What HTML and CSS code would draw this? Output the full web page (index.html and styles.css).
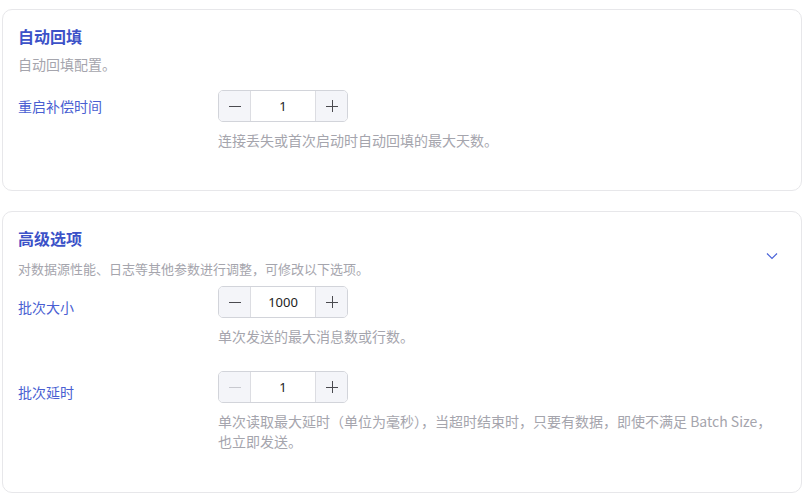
FILE: index.html
```html
<!DOCTYPE html>
<html lang="zh-CN">
<head>
<meta charset="utf-8">
<link rel="stylesheet" href="styles.css">
</head>
<body>
<div class="page">
  <section class="card card-first">
    <div class="card-head">
      <div class="head-text">
        <h2 class="title">自动回填</h2>
        <p class="desc">自动回填配置。</p>
      </div>
    </div>
    <div class="form">
      <div class="row">
        <label class="label">重启补偿时间</label>
        <div class="field">
          <div class="stepper">
            <span class="btn"><svg width="12" height="12" viewBox="0 0 12 12"><path d="M0 6.5H12" stroke="currentColor" stroke-width="1"/></svg></span>
            <span class="value">1</span>
            <span class="btn"><svg width="12" height="12" viewBox="0 0 12 12"><path d="M0 6.5H12M6.5 0V12" stroke="currentColor" stroke-width="1"/></svg></span>
          </div>
          <p class="hint">连接丢失或首次启动时自动回填的最大天数。</p>
        </div>
      </div>
    </div>
  </section>

  <section class="card card-second">
    <div class="card-head">
      <div class="head-text">
        <h2 class="title">高级选项</h2>
        <p class="desc">对数据源性能、日志等其他参数进行调整，可修改以下选项。</p>
      </div>
      <svg class="chevron" width="12" height="8" viewBox="0 0 12 8"><path d="M1 1.5 L6 6.5 L11 1.5" fill="none" stroke="#4a63d8" stroke-width="1.2"/></svg>
    </div>
    <div class="form">
      <div class="row">
        <label class="label">批次大小</label>
        <div class="field">
          <div class="stepper">
            <span class="btn"><svg width="12" height="12" viewBox="0 0 12 12"><path d="M0 6.5H12" stroke="currentColor" stroke-width="1"/></svg></span>
            <span class="value">1000</span>
            <span class="btn"><svg width="12" height="12" viewBox="0 0 12 12"><path d="M0 6.5H12M6.5 0V12" stroke="currentColor" stroke-width="1"/></svg></span>
          </div>
          <p class="hint">单次发送的最大消息数或行数。</p>
        </div>
      </div>
      <div class="row">
        <label class="label">批次延时</label>
        <div class="field">
          <div class="stepper">
            <span class="btn disabled"><svg width="12" height="12" viewBox="0 0 12 12"><path d="M0 6.5H12" stroke="currentColor" stroke-width="1"/></svg></span>
            <span class="value">1</span>
            <span class="btn"><svg width="12" height="12" viewBox="0 0 12 12"><path d="M0 6.5H12M6.5 0V12" stroke="currentColor" stroke-width="1"/></svg></span>
          </div>
          <p class="hint">单次读取最大延时（单位为毫秒），当超时结束时，只要有数据，即使不满足 Batch Size，也立即发送。</p>
        </div>
      </div>
    </div>
  </section>
</div>
</body>
</html>
```
FILE: styles.css
```css
* { box-sizing: border-box; }
html, body { margin: 0; padding: 0; background: #fff; }
body {
  font-family: "Noto Sans", "Noto Sans CJK SC", sans-serif;
  color: #222;
}
.page {
  padding: 9px 5px 0 2px;
  display: flex;
  flex-direction: column;
  gap: 20px;
}
.card {
  width: 800px;
  border: 1px solid #e7e7ea;
  border-radius: 10px;
  padding: 14px 18px 40px 15px;
}
.card-second { padding-bottom: 41px; }
.card-head {
  display: flex;
  align-items: center;
  justify-content: space-between;
  padding-right: 6px;
}
.title {
  margin: 0;
  font-family: "Noto Sans CJK SC", sans-serif;
  font-size: 16px;
  line-height: 24px;
  font-weight: 700;
  color: #3c52c8;
}
.desc {
  margin: 6px 0 0;
  font-family: "Noto Sans CJK SC", sans-serif;
  font-size: 14px;
  line-height: 20px;
  color: #a5a5ad;
}
.card-second .desc { margin-top: 9px; font-size: 13px; }
.chevron { display: block; margin-top: 7px; margin-right: -1px; }
.form { display: flex; flex-direction: column; gap: 25px; }
.card-first .form { margin-top: 16px; }
.card-second .form { margin-top: 7px; }
.row { display: flex; }
.label {
  width: 200px;
  flex: none;
  font-family: "Noto Sans CJK SC", sans-serif;
  font-size: 14px;
  line-height: 32px;
  color: #4a5fd2;
}
.card-second .label { padding-top: 5px; }
.field { flex: 1; }
.stepper {
  display: flex;
  width: 130px;
  height: 32px;
  border: 1px solid #d2d4da;
  border-radius: 5px;
  overflow: hidden;
}
.btn {
  width: 32px;
  flex: none;
  display: flex;
  align-items: center;
  justify-content: center;
  background: #f4f5f9;
  color: #4a4a4f;
}
.btn svg { display: block; }
.btn:first-child { border-right: 1px solid #dcdde2; }
.btn:last-child { border-left: 1px solid #dcdde2; }
.btn.disabled { color: #c8c9cf; }
.value {
  flex: 1;
  display: flex;
  align-items: center;
  justify-content: center;
  font-size: 13px;
  color: #222;
}
.hint {
  margin: 8px 0 0;
  font-family: "Noto Sans CJK SC", sans-serif;
  font-size: 14px;
  line-height: 20px;
  color: #a5a5ad;
}
```
